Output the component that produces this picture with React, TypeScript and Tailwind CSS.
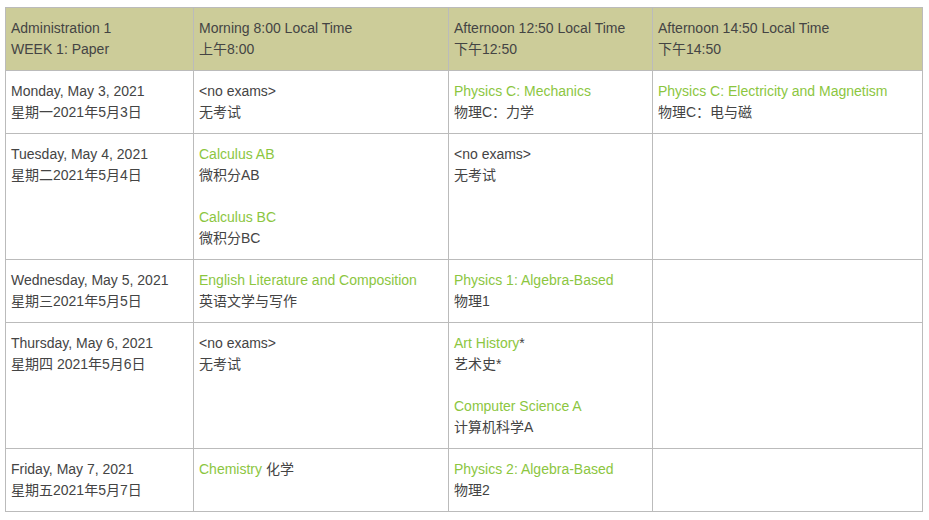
const G = ({ children }: { children: React.ReactNode }) => (
  <span className="text-[#8cc63f]">{children}</span>
);

type Cell = React.ReactNode;

const rows: Cell[][] = [
  [
    <>Monday, May 3, 2021<br />星期一2021年5月3日</>,
    <>&lt;no exams&gt;<br />无考试</>,
    <><G>Physics C: Mechanics</G><br />物理C：力学</>,
    <><G>Physics C: Electricity and Magnetism</G><br />物理C：电与磁</>,
  ],
  [
    <>Tuesday, May 4, 2021<br />星期二2021年5月4日</>,
    <><G>Calculus AB</G><br />微积分AB<br /><br /><G>Calculus BC</G><br />微积分BC</>,
    <>&lt;no exams&gt;<br />无考试</>,
    null,
  ],
  [
    <>Wednesday, May 5, 2021<br />星期三2021年5月5日</>,
    <><G>English Literature and Composition</G><br />英语文学与写作</>,
    <><G>Physics 1: Algebra-Based</G><br />物理1</>,
    null,
  ],
  [
    <>Thursday, May 6, 2021<br />星期四 2021年5月6日</>,
    <>&lt;no exams&gt;<br />无考试</>,
    <><G>Art History</G>*<br />艺术史*<br /><br /><G>Computer Science A</G><br />计算机科学A</>,
    null,
  ],
  [
    <>Friday, May 7, 2021<br />星期五2021年5月7日</>,
    <><G>Chemistry</G> 化学</>,
    <><G>Physics 2: Algebra-Based</G><br />物理2</>,
    null,
  ],
];

export default function App() {
  return (
    <div className="bg-white w-[929px] h-[520px] pt-[7px] pl-[5px] font-['Liberation_Sans','Noto_Sans_CJK_SC',sans-serif] text-[14px] leading-[21px] text-[#444]">
      <table className="border-collapse table-fixed w-[917px]">
        <colgroup>
          <col className="w-[188px]" />
          <col className="w-[255px]" />
          <col className="w-[204px]" />
          <col className="w-[270px]" />
        </colgroup>
        <thead>
          <tr className="bg-[#cccc99]">
            <th className="border border-[#bbb] px-[5px] py-[10px] text-left align-top font-normal">Administration 1<br />WEEK 1: Paper</th>
            <th className="border border-[#bbb] px-[5px] py-[10px] text-left align-top font-normal">Morning 8:00 Local Time<br />上午8:00</th>
            <th className="border border-[#bbb] px-[5px] py-[10px] text-left align-top font-normal">Afternoon 12:50 Local Time<br />下午12:50</th>
            <th className="border border-[#bbb] px-[5px] py-[10px] text-left align-top font-normal">Afternoon 14:50 Local Time<br />下午14:50</th>
          </tr>
        </thead>
        <tbody>
          {rows.map((r, i) => (
            <tr key={i}>
              {r.map((c, j) => (
                <td key={j} className="border border-[#bbb] px-[5px] py-[10px] align-top">{c}</td>
              ))}
            </tr>
          ))}
        </tbody>
      </table>
    </div>
  );
}
